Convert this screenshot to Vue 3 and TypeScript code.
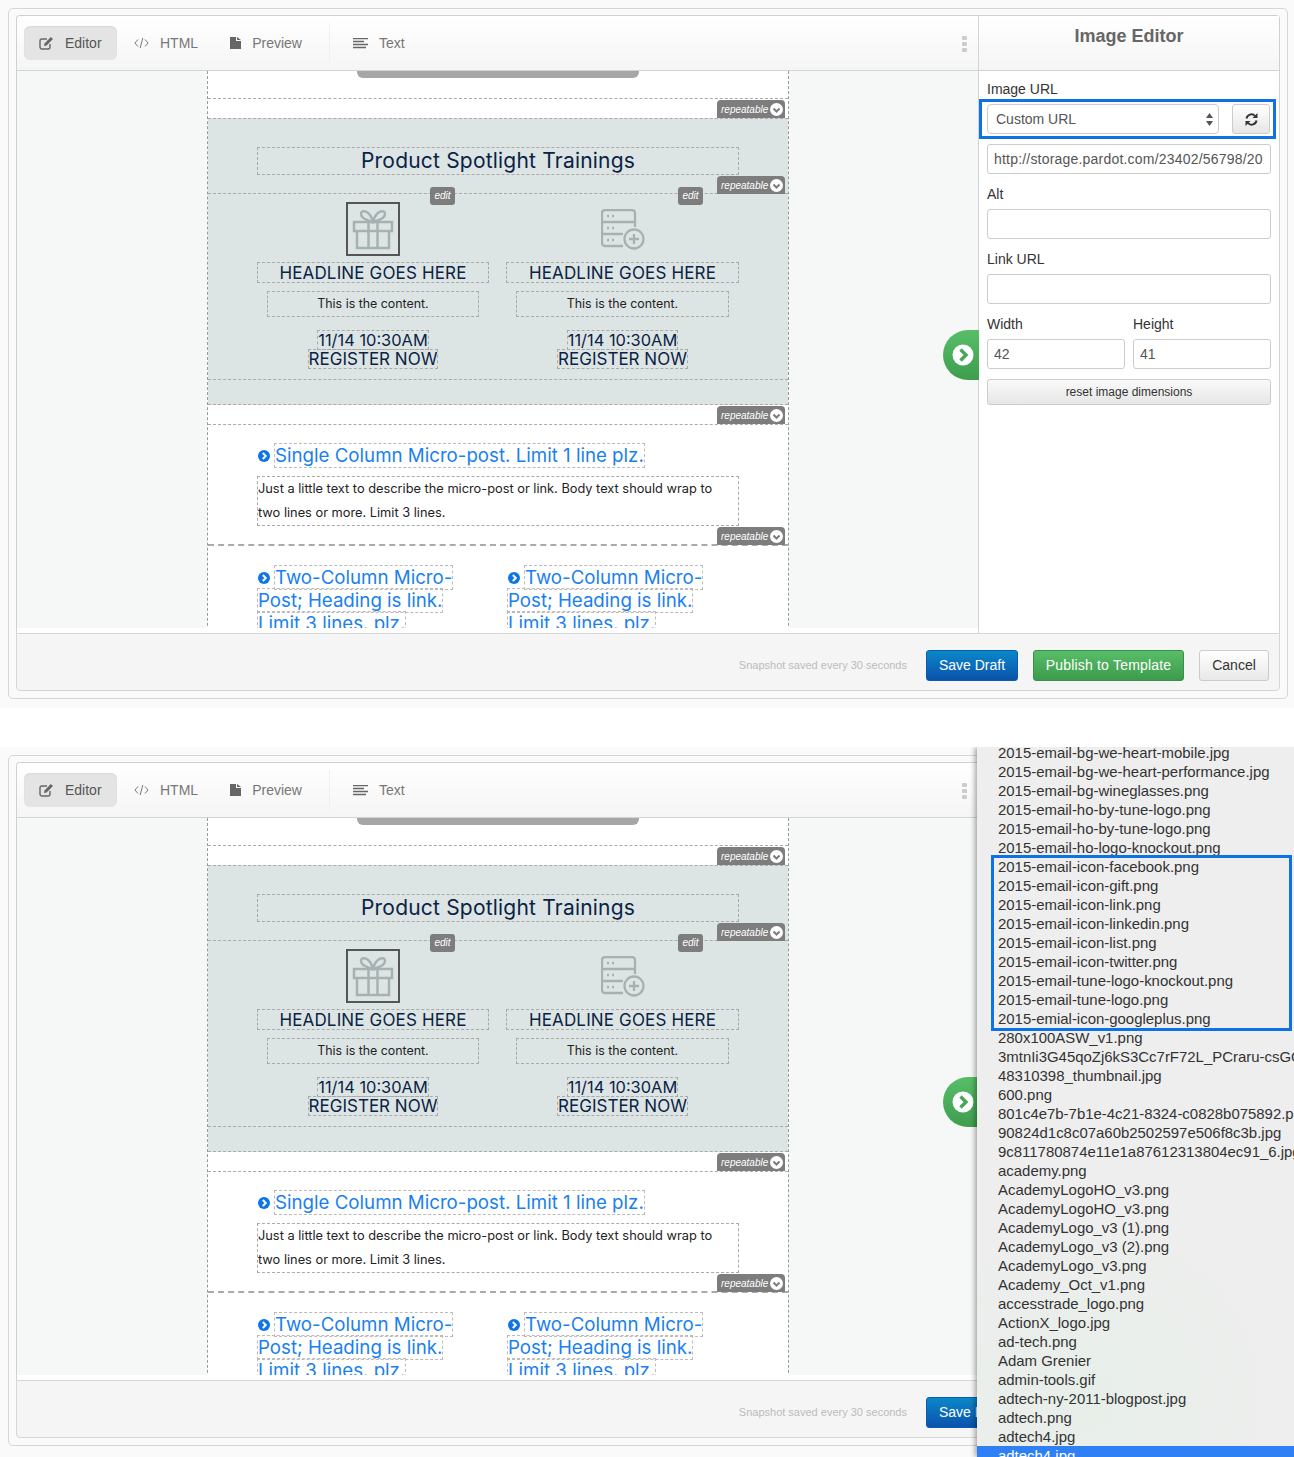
<template>
  <div class="page">
    <section v-for="shot in shots" :key="shot.id" class="shot" :class="{ 'shot-menu': shot.showFiles }">
      <div class="frame">
        <div class="workspace">
          <div class="editor">
            <div class="toolbar">
              <button class="tool tool-active">
                <svg class="tool-icon" width="15" height="14" viewBox="0 0 15 14"><path d="M11 8v3a2 2 0 0 1-2 2H3a2 2 0 0 1-2-2V5a2 2 0 0 1 2-2h5" fill="none" stroke="#666" stroke-width="1.4"/><path d="M5.5 7.5 11.8.9l2.2 2.1-6.400 6.500-2.600.5z" fill="#666"/></svg>
                Editor
              </button>
              <button class="tool tool-html">
                <svg class="tool-icon" width="15" height="12" viewBox="0 0 15 12"><path d="M4 2.500.9 6 4 9.500M11 2.500 14.100 6 11 9.500M8.800 1 6.200 11" fill="none" stroke="#777" stroke-width="1"/></svg>
                HTML
              </button>
              <button class="tool tool-preview">
                <svg class="tool-icon" width="11" height="12" viewBox="0 0 11 12"><path d="M0 0h6v4h5v8H0zM7 0l4 3H7z" fill="#666"/></svg>
                Preview
              </button>
              <span class="tool-divider"></span>
              <button class="tool tool-text">
                <svg class="tool-icon" width="15" height="11" viewBox="0 0 15 11"><path d="M0 .5h15M0 3.500h11M0 6.500h15M0 9.500h13" stroke="#666" stroke-width="1.500"/></svg>
                Text
              </button>
              <span class="handle"><i></i><i></i><i></i></span>
            </div>

            <div class="canvas">
              <div class="email">
                <div class="email-top"><span class="scroll-bar"></span></div>
                <div class="email-gap"></div>

                <div class="spotlight">
                  <span class="badge"><em>repeatable</em><svg width="13" height="13" viewBox="0 0 13 13"><circle cx="6.500" cy="6.500" r="6.500" fill="#fff"/><path d="m3.500 5.500 3 3 3-3" fill="none" stroke="#7d7d7d" stroke-width="2"/></svg></span>
                  <h2 class="spot-title dashed">Product Spotlight Trainings</h2>
                  <div class="spot-row">
                    <span class="badge badge-row"><em>repeatable</em><svg width="13" height="13" viewBox="0 0 13 13"><circle cx="6.500" cy="6.500" r="6.500" fill="#fff"/><path d="m3.500 5.500 3 3 3-3" fill="none" stroke="#7d7d7d" stroke-width="2"/></svg></span>
                    <div v-for="(col, i) in trainings" :key="i" class="training">
                      <span class="edit-tag">edit</span>
                      <div class="training-img" :class="{ selected: col.selected }">
                        <svg v-if="col.icon === 'gift'" width="42" height="41" viewBox="0 0 42 41" fill="none" stroke="#a7b1b1" stroke-width="2.500">
                          <path d="M21 13c-4-1-12-3-12-8 0-5 9-4 12 8zm0 0c4-1 12-3 12-8 0-5-9-4-12 8z"/>
                          <path d="M2 13h38v9H2zM5 22h32v17H5zM16.500 13v26M25.500 13v26"/>
                        </svg>
                        <svg v-else width="44" height="41" viewBox="0 0 44 41" fill="none" stroke="#a7b1b1" stroke-width="2.300">
                          <path d="M34 18V4a3 3 0 0 0-3-3H4a3 3 0 0 0-3 3v30a3 3 0 0 0 3 3h18M1 13h33M1 25h21"/>
                          <circle cx="33" cy="30" r="9.500"/>
                          <path d="M33 25v10M28 30h10"/>
                          <path d="M6 7h2M11 7h2M6 19h2M11 19h2M6 31h2M11 31h2"/>
                        </svg>
                      </div>
                      <h3 class="training-head dashed">HEADLINE GOES HERE</h3>
                      <p class="training-body dashed">This is the content.</p>
                      <div class="training-cta">
                        <span class="dashed cta-date">11/14 10:30AM</span>
                        <span class="dashed">REGISTER NOW</span>
                      </div>
                    </div>
                  </div>
                </div>

                <div class="email-gap"></div>

                <div class="micro">
                  <span class="badge"><em>repeatable</em><svg width="13" height="13" viewBox="0 0 13 13"><circle cx="6.500" cy="6.500" r="6.500" fill="#fff"/><path d="m3.500 5.500 3 3 3-3" fill="none" stroke="#7d7d7d" stroke-width="2"/></svg></span>
                  <div class="micro-link">
                    <svg class="bullet" width="12" height="12" viewBox="0 0 12 12"><circle cx="6" cy="6" r="6" fill="#0f75e6"/><path d="m4.800 3 3 3-3 3" fill="none" stroke="#fff" stroke-width="2"/></svg>
                    <a class="link-line">Single Column Micro-post. Limit 1 line plz.</a>
                  </div>
                  <p class="micro-text dashed">Just a little text to describe the micro-post or link. Body text should wrap to<br>two lines or more. Limit 3 lines.</p>
                </div>

                <div class="micro-two">
                  <span class="badge"><em>repeatable</em><svg width="13" height="13" viewBox="0 0 13 13"><circle cx="6.500" cy="6.500" r="6.500" fill="#fff"/><path d="m3.500 5.500 3 3 3-3" fill="none" stroke="#7d7d7d" stroke-width="2"/></svg></span>
                  <div v-for="n in 2" :key="n" class="micro-link two-col">
                    <svg class="bullet" width="12" height="12" viewBox="0 0 12 12"><circle cx="6" cy="6" r="6" fill="#0f75e6"/><path d="m4.800 3 3 3-3 3" fill="none" stroke="#fff" stroke-width="2"/></svg>
                    <a class="link-line">Two-Column Micro-<br>Post; Heading is link.<br>Limit 3 lines. plz.</a>
                  </div>
                </div>
              </div>
            </div>
          </div>

          <aside class="panel">
            <span class="panel-tab">
              <svg width="22" height="22" viewBox="0 0 22 22"><circle cx="11" cy="11" r="10.500" fill="#fff"/><path d="m8.500 5.500 5.500 5.500-5.500 5.500" fill="none" stroke="#46a856" stroke-width="3.400"/></svg>
            </span>
            <h2 class="panel-title">Image Editor</h2>
            <div class="panel-body">
              <label class="field-label">Image URL</label>
              <div class="url-picker">
                <div class="fake-select">
                  Custom URL
                  <svg width="7" height="13" viewBox="0 0 7 13"><path d="M3.500 0 7 5H0zM3.500 13 0 8h7z" fill="#555"/></svg>
                </div>
                <button class="refresh">
                  <svg width="13" height="13" viewBox="0 0 13 13" fill="none" stroke="#333" stroke-width="1.900"><path d="M1.500 5.500A5 5 0 0 1 10 2.800"/><path d="M11.500 7.500A5 5 0 0 1 3 10.200"/><path d="M12.500 0v5h-5z" fill="#333" stroke="none"/><path d="M.5 13V8h5z" fill="#333" stroke="none"/></svg>
                </button>
              </div>
              <input class="field field-url" value="http://storage.pardot.com/23402/56798/2015-email-icon-gift.png" />
              <label class="field-label label-next">Alt</label>
              <input class="field" />
              <label class="field-label label-next">Link URL</label>
              <input class="field" />
              <div class="size-row">
                <div>
                  <label class="field-label">Width</label>
                  <input class="field" value="42" />
                </div>
                <div>
                  <label class="field-label">Height</label>
                  <input class="field" value="41" />
                </div>
              </div>
              <button class="reset">reset image dimensions</button>
            </div>
          </aside>
        </div>

        <div class="footer">
          <span class="snapshot">Snapshot saved every 30 seconds</span>
          <button class="btn btn-blue">Save Draft</button>
          <button class="btn btn-green">Publish to Template</button>
          <button class="btn btn-plain">Cancel</button>
        </div>
      </div>

      <div v-if="shot.showFiles" class="file-menu">
        <div v-for="(file, i) in files" :key="i" class="file-row" :class="{ current: i === files.length - 1 }">{{ file }}</div>
        <span class="file-mark"></span>
      </div>
    </section>
  </div>
</template>

<script setup lang="ts">
const shots = [
  { id: 1, showFiles: false },
  { id: 2, showFiles: true }
]

const trainings = [
  { icon: 'gift', selected: true },
  { icon: 'server', selected: false }
]

const files: string[] = [
  '2015-email-bg-we-heart-mobile.jpg',
  '2015-email-bg-we-heart-performance.jpg',
  '2015-email-bg-wineglasses.png',
  '2015-email-ho-by-tune-logo.png',
  '2015-email-ho-by-tune-logo.png',
  '2015-email-ho-logo-knockout.png',
  '2015-email-icon-facebook.png',
  '2015-email-icon-gift.png',
  '2015-email-icon-link.png',
  '2015-email-icon-linkedin.png',
  '2015-email-icon-list.png',
  '2015-email-icon-twitter.png',
  '2015-email-tune-logo-knockout.png',
  '2015-email-tune-logo.png',
  '2015-emial-icon-googleplus.png',
  '280x100ASW_v1.png',
  '3mtnIi3G45qoZj6kS3Cc7rF72L_PCraru-csGOgGdQw.png',
  '48310398_thumbnail.jpg',
  '600.png',
  '801c4e7b-7b1e-4c21-8324-c0828b075892.png',
  '90824d1c8c07a60b2502597e506f8c3b.jpg',
  '9c811780874e11e1a87612313804ec91_6.jpg',
  'academy.png',
  'AcademyLogoHO_v3.png',
  'AcademyLogoHO_v3.png',
  'AcademyLogo_v3 (1).png',
  'AcademyLogo_v3 (2).png',
  'AcademyLogo_v3.png',
  'Academy_Oct_v1.png',
  'accesstrade_logo.png',
  'ActionX_logo.jpg',
  'ad-tech.png',
  'Adam Grenier',
  'admin-tools.gif',
  'adtech-ny-2011-blogpost.jpg',
  'adtech.png',
  'adtech4.jpg',
  'adtech4.jpg'
]
</script>

<style>
html,
body {
  margin: 0;
  background: #fff;
}
</style>

<style scoped>
.page {
  height: 1457px;
  overflow: hidden;
  background: #fff;
  font-family: "Liberation Sans", Arial, sans-serif;
  color: #333;
}

.shot {
  position: relative;
  height: 708px;
  padding-top: 8px;
  box-sizing: border-box;
  background: #fafafa;
}

.shot-menu {
  height: 710px;
  margin-top: 39px;
}

.frame {
  margin: 0 6px 0 8px;
  height: 691px;
  box-sizing: border-box;
  padding: 6px 7px;
  border: 1px solid #d6d6d6;
  border-radius: 5px;
  display: flex;
  flex-direction: column;
}

.workspace {
  display: flex;
  height: 618px;
  flex: none;
  background: #fff;
  border: 1px solid #d0d0d0;
  border-bottom: none;
  border-radius: 4px 4px 0 0;
  box-sizing: border-box;
}

.editor {
  width: 961px;
  flex: none;
  display: flex;
  flex-direction: column;
}

.toolbar {
  height: 55px;
  flex: none;
  box-sizing: border-box;
  display: flex;
  align-items: flex-start;
  padding: 10px 0 0 7px;
  position: relative;
  border-bottom: 1px solid #d4d4d4;
  background: linear-gradient(#fff, #f5f5f5);
  border-radius: 4px 0 0 0;
}

.tool {
  height: 34px;
  display: flex;
  align-items: center;
  border: none;
  background: none;
  padding: 0;
  font: 14px "Liberation Sans", Arial, sans-serif;
  color: #777;
}

.tool-active {
  width: 93px;
  padding-left: 15px;
  box-sizing: border-box;
  border-radius: 6px;
  background: #e4e4e4;
  box-shadow: inset 0 1px 2px rgba(0, 0, 0, 0.06);
  color: #555;
}

.tool-icon {
  margin-right: 11px;
}

.tool-html {
  margin-left: 17px;
}

.tool-preview {
  margin-left: 32px;
}

.tool-divider {
  width: 1px;
  height: 40px;
  margin: -3px 0 0 27px;
  background: #f0f0f0;
}

.tool-text {
  margin-left: 23px;
}

.handle {
  position: absolute;
  left: 945px;
  top: 20px;
  display: flex;
  flex-direction: column;
  gap: 2px;
}

.handle i {
  width: 5px;
  height: 4px;
  background: #ccc;
  border-radius: 1px;
}

.canvas {
  height: 557px;
  flex: none;
  overflow: hidden;
  background: #f6f8f8;
}

.email {
  width: 582px;
  height: 600px;
  margin-left: 190px;
  box-sizing: border-box;
  background: #fff;
  border-left: 1px dashed #999;
  border-right: 1px dashed #999;
  font-family: Inter, "Liberation Sans", sans-serif;
  color: #0b2244;
}

.email-top {
  height: 28px;
  box-sizing: border-box;
  border-bottom: 1px dashed #aaa;
  display: flex;
  justify-content: center;
}

.scroll-bar {
  display: block;
  width: 282px;
  height: 7px;
  background: #a6a6a6;
  border-radius: 0 0 6px 6px;
}

.email-gap {
  height: 19px;
}

.dashed {
  border: 1px dashed #aaa;
  box-sizing: border-box;
}

.badge {
  position: absolute;
  right: 3px;
  top: -19px;
  width: 68px;
  height: 18px;
  box-sizing: border-box;
  padding: 0 2px 0 4px;
  display: flex;
  align-items: center;
  justify-content: space-between;
  border-radius: 4px 4px 0 0;
  background: #7d7d7d;
  color: #fff;
  font-family: "Liberation Sans", Arial, sans-serif;
  font-size: 10px;
}

.badge-row {
  top: -18px;
  right: 3px;
}

.spotlight {
  position: relative;
  height: 287px;
  box-sizing: border-box;
  padding-top: 28px;
  background: #dce5e4;
  border-top: 1px dashed #aaa;
  border-bottom: 1px dashed #aaa;
}

.spot-title {
  margin: 0 49px;
  height: 28px;
  font-size: 21px;
  letter-spacing: 0.2px;
  line-height: 26px;
  font-weight: 400;
  text-align: center;
}

.spot-row {
  position: relative;
  height: 187px;
  margin-top: 18px;
  box-sizing: border-box;
  padding: 0 49px;
  display: grid;
  grid-template-columns: 232px 233px;
  column-gap: 17px;
  border-top: 1px dashed #aaa;
  border-bottom: 1px dashed #aaa;
}

.training {
  position: relative;
}

.edit-tag {
  position: absolute;
  right: 34px;
  top: -7px;
  width: 25px;
  height: 18px;
  border-radius: 3px;
  background: #7d7d7d;
  color: #fff;
  font-family: "Liberation Sans", Arial, sans-serif;
  font-size: 10px;
  font-style: italic;
  line-height: 18px;
  text-align: center;
}

.training + .training .edit-tag {
  right: 36px;
}

.training-img {
  width: 54px;
  height: 54px;
  margin: 8px auto 6px;
  box-sizing: border-box;
  display: flex;
  align-items: center;
  justify-content: center;
}

.training-img.selected {
  border: 2px solid #555;
}

.training-head {
  margin: 0;
  height: 21px;
  font-size: 17px;
  letter-spacing: 0.15px;
  line-height: 20px;
  font-weight: 400;
  text-align: center;
}

.training-body {
  margin: 8px 10px 0;
  height: 26px;
  font-size: 12.4px;
  line-height: 24px;
  text-align: center;
  color: #222;
}

.training-cta {
  margin-top: 13px;
  display: flex;
  flex-direction: column;
  align-items: center;
  font-size: 17px;
  line-height: 18px;
}

.cta-date {
  font-size: 16.4px;
}

.training-cta span + span {
  margin-top: -1px;
}

.micro {
  position: relative;
  height: 122px;
  box-sizing: border-box;
  padding: 20px 49px 0;
  border-top: 1px dashed #aaa;
  border-bottom: 2px dashed #aaa;
}

.micro-link {
  font-size: 18.7px;
  line-height: 21px;
  color: #1a7ff0;
}

.bullet {
  margin: 0 4px 0 1px;
  vertical-align: 0;
}

.link-line {
  border: 1px dashed #bbb;
  -webkit-box-decoration-break: clone;
  box-decoration-break: clone;
}

.micro-text {
  margin: 10px 0 0;
  height: 50px;
  font-size: 12.8px;
  line-height: 24px;
  color: #222;
}

.micro-two {
  position: relative;
  padding: 20px 49px 0;
  display: grid;
  grid-template-columns: 250px 232px;
}

.two-col {
  line-height: 23px;
}

.panel {
  position: relative;
  flex: 1;
  border-left: 1px solid #d4d4d4;
}

.panel-tab {
  position: absolute;
  left: -36px;
  top: 314px;
  width: 36px;
  height: 50px;
  box-sizing: border-box;
  padding-left: 9px;
  display: flex;
  align-items: center;
  border-radius: 25px 0 0 25px;
  background: linear-gradient(#57be67, #3e9d4e);
}

.panel-title {
  margin: 0;
  height: 55px;
  box-sizing: border-box;
  padding-top: 9px;
  border-bottom: 1px solid #d4d4d4;
  background: linear-gradient(#fff, #f5f5f5);
  font-size: 18px;
  line-height: 22px;
  font-weight: 700;
  text-align: center;
  color: #666;
}

.panel-body {
  padding: 10px 8px 0;
}

.field-label {
  display: block;
  font-size: 14px;
  line-height: 16px;
  color: #333;
}

.label-next {
  margin-top: 12px;
  margin-bottom: 7px;
}

.url-picker {
  display: flex;
  gap: 13px;
  margin: 2px -5px 5px -8px;
  padding: 2px 3px 2px 5px;
  height: 40px;
  box-sizing: border-box;
  border: 3px solid #0d72e4;
  align-items: center;
}

.fake-select {
  width: 232px;
  height: 30px;
  flex: none;
  box-sizing: border-box;
  padding: 0 5px 0 8px;
  display: flex;
  align-items: center;
  justify-content: space-between;
  border: 1px solid #ccc;
  border-radius: 4px;
  background: #fff;
  font-size: 14px;
  color: #555;
}

.refresh {
  width: 38px;
  height: 30px;
  flex: none;
  padding: 0;
  display: flex;
  align-items: center;
  justify-content: center;
  border: 1px solid #ccc;
  border-radius: 3px;
  background: linear-gradient(#fff, #e6e6e6);
}

.field {
  display: block;
  width: 100%;
  height: 30px;
  box-sizing: border-box;
  padding: 0 6px;
  border: 1px solid #ccc;
  border-radius: 3px;
  background: #fff;
  font: 14px "Liberation Sans", Arial, sans-serif;
  color: #555;
}

.field-url {
  letter-spacing: 0.2px;
}

.size-row {
  display: grid;
  grid-template-columns: 138px 138px;
  column-gap: 8px;
  margin-top: 12px;
}

.size-row .field-label {
  margin-bottom: 7px;
}

.reset {
  display: block;
  width: 100%;
  height: 26px;
  margin-top: 10px;
  padding: 0;
  border: 1px solid #ccc;
  border-radius: 3px;
  background: linear-gradient(#fafafa, #e6e6e6);
  font: 12px "Liberation Sans", Arial, sans-serif;
  color: #333;
}

.footer {
  height: 58px;
  flex: none;
  box-sizing: border-box;
  display: flex;
  align-items: center;
  justify-content: flex-end;
  padding: 6px 10px 0 0;
  border: 1px solid #d6d6d6;
  border-radius: 0 0 4px 4px;
  background: #f5f5f5;
}

.snapshot {
  margin-right: 19px;
  font-size: 11px;
  color: #bbb;
}

.btn {
  height: 31px;
  padding: 0;
  border-radius: 3px;
  font: 14px "Liberation Sans", Arial, sans-serif;
}

.btn-blue {
  width: 92px;
  border: 1px solid #0b5bb0;
  background: linear-gradient(#0a88c9, #0b52ac);
  color: #fff;
}

.btn-green {
  width: 151px;
  margin-left: 15px;
  border: 1px solid #3c8f4b;
  background: linear-gradient(#58bd68, #3c9c4c);
  color: #fff;
  letter-spacing: 0.2px;
}

.btn-plain {
  width: 70px;
  margin-left: 15px;
  border: 1px solid #ccc;
  background: linear-gradient(#fff, #e8e8e8);
  color: #333;
}

.file-menu {
  position: absolute;
  left: 977px;
  right: 0;
  top: 0;
  height: 710px;
  overflow: hidden;
  white-space: nowrap;
  background:
    radial-gradient(circle at 35% 92%, rgba(215, 240, 220, 0.3), transparent 30%),
    #eee;
  box-shadow: -2px 0 5px rgba(0, 0, 0, 0.35);
  clip-path: inset(0 0 0 -8px);
}

.file-row {
  height: 19px;
  padding-left: 21px;
  font-size: 14.95px;
  line-height: 19px;
  color: #333;
  position: relative;
  top: -4px;
}

.file-row.current {
  background: #2f7ff5;
  color: #fff;
}

.file-mark {
  position: absolute;
  left: 14px;
  top: 108px;
  width: 301px;
  height: 176px;
  box-sizing: border-box;
  border: 3px solid #0d72e4;
}
</style>
